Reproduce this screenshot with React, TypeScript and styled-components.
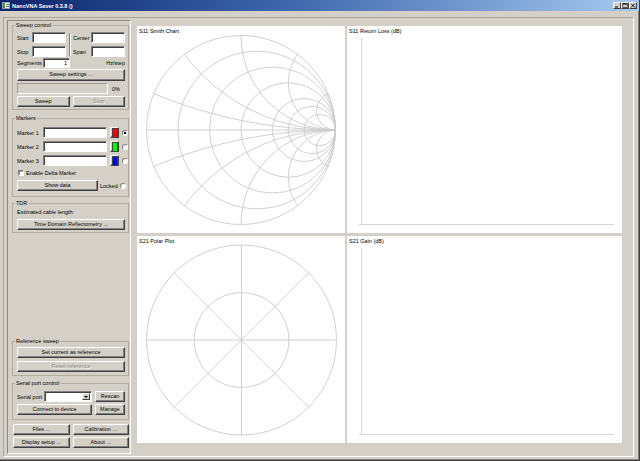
import React from "react";
import styled, { createGlobalStyle } from "styled-components";

const GlobalStyle = createGlobalStyle`
  html, body {
    margin: 0;
    padding: 0;
    background: #d4d0c8;
  }
  body {
    font-family: "Liberation Sans", Arial, sans-serif;
    font-size: 5.5px;
    color: #000;
  }
  * {
    box-sizing: border-box;
  }
`;

// ---- window chrome ----
const Window = styled.div`
  width: 640px;
  height: 461px;
  overflow: hidden;
  display: flex;
  flex-direction: column;
  background: #d4d0c8;
  border-right: 1px solid #404040;
  border-bottom: 1px solid #404040;
  box-shadow: inset -1px -1px 0 #808080;
`;

const TitleBar = styled.div`
  flex: none;
  height: 11px;
  display: flex;
  align-items: center;
  padding: 0 2px 0 2px;
  background: linear-gradient(to right, #0a246a 0%, #3e67ad 45%, #a6caf0 100%);
`;

const TitleText = styled.span`
  margin-left: 2px;
  color: #fff;
  font-weight: bold;
  font-size: 5.5px;
  white-space: nowrap;
`;

const CaptionButtons = styled.div`
  margin-left: auto;
  display: flex;
`;

const CaptionButton = styled.div`
  width: 8px;
  height: 7px;
  display: flex;
  align-items: center;
  justify-content: center;
  background: #d4d0c8;
  border: 1px solid;
  border-color: #fff #404040 #404040 #fff;
`;

const Client = styled.div`
  flex: 1;
  display: flex;
  padding: 6px 5px 3px 3px;
`;

const Central = styled.div`
  flex: 1;
  display: flex;
  align-items: flex-start;
  border: 1px solid;
  border-color: #aaa69e #fff #fff #aaa69e;
`;

// ---- left control pane ----
const ControlPane = styled.div`
  flex: none;
  width: 124px;
  height: 434px;
  margin: 2px 0 0 3px;
  display: flex;
  flex-direction: column;
  padding: 1px 1px 5px 4px;
  border: 1px solid;
  border-color: #8c8880 #fff #fff #8c8880;
`;

const Group = styled.fieldset<{ $mt?: number; $pt: number; $pb: number }>`
  margin: ${(p) => p.$mt ?? 0}px 0 0 0;
  padding: ${(p) => p.$pt}px 3px ${(p) => p.$pb}px 4px;
  min-width: 0;
  border: 1px solid #b0aca4;
  display: flex;
  flex-direction: column;
`;

const Legend = styled.legend`
  font-size: 5.5px;
  line-height: 7px;
  padding: 0 1px;
  margin-left: -2px;
`;

const Spacer = styled.div`
  flex: 1;
`;

const Row = styled.div<{ $h: number; $mt?: number; $cols: string; $gap?: number }>`
  flex: none;
  height: ${(p) => p.$h}px;
  margin-top: ${(p) => p.$mt ?? 0}px;
  display: grid;
  grid-template-columns: ${(p) => p.$cols};
  column-gap: ${(p) => p.$gap ?? 0}px;
  align-items: center;
`;

const FreqGrid = styled.div`
  flex: none;
  height: 25px;
  display: grid;
  grid-template-columns: 15px 34px 7px 18px 34px;
  grid-template-rows: 11px 11px;
  row-gap: 3px;
  align-items: center;
`;

const Separator = styled.div`
  grid-column: 3;
  grid-row: 1 / span 2;
  justify-self: center;
  width: 2px;
  height: 23px;
  border-left: 1px solid #808080;
  border-right: 1px solid #fff;
`;

const Label = styled.span<{ $align?: string }>`
  white-space: nowrap;
  text-align: ${(p) => p.$align ?? "left"};
`;

const TextLine = styled.div`
  flex: none;
  height: 7px;
  line-height: 7px;
  white-space: nowrap;
`;

const Field = styled.input<{ $align?: string }>`
  width: 100%;
  height: 11px;
  margin: 0;
  padding: 0 2px;
  font: inherit;
  font-size: 5.5px;
  text-align: ${(p) => p.$align ?? "left"};
  background: #fff;
  border: 1px solid;
  border-color: #808080 #fff #fff #808080;
  box-shadow: inset 1px 1px 0 #404040;
  outline: none;
`;

const Button = styled.button<{ $h?: number; $mt?: number; $off?: boolean }>`
  flex: none;
  width: 100%;
  height: ${(p) => p.$h ?? 11}px;
  margin: ${(p) => p.$mt ?? 0}px 0 0 0;
  padding: 0;
  font: inherit;
  font-size: 5.5px;
  line-height: 1;
  white-space: nowrap;
  color: ${(p) => (p.$off ? "#86827a" : "#000")};
  text-shadow: ${(p) => (p.$off ? "0.5px 0.5px 0 #fff" : "none")};
  background: #d4d0c8;
  border: 1px solid;
  border-color: #fff #404040 #404040 #fff;
  box-shadow: inset -1px -1px 0 #808080;
`;

const ColorButton = styled.div<{ $color: string }>`
  width: 9px;
  height: 11px;
  display: flex;
  align-items: center;
  justify-content: center;
  background: #d4d0c8;
  border: 1px solid;
  border-color: #fff #404040 #404040 #fff;
  box-shadow: inset -1px -1px 0 #808080;

  &::after {
    content: "";
    width: 4px;
    height: 8px;
    background: ${(p) => p.$color};
    border: 0.5px solid #404040;
  }
`;

const Radio = styled.span<{ $on?: boolean }>`
  width: 6px;
  height: 6px;
  border-radius: 50%;
  border: 1px solid;
  border-color: #808080 #fff #fff #808080;
  background: ${(p) =>
    p.$on ? "radial-gradient(circle, #000 0 1.1px, #fff 1.4px)" : "#fff"};
`;

const CheckRow = styled.div`
  flex: none;
  height: 8px;
  margin-top: 3px;
  display: flex;
  align-items: center;
  gap: 2px;
  padding-left: 1px;
`;

const CheckBox = styled.span`
  width: 6px;
  height: 6px;
  background: #fff;
  border: 1px solid;
  border-color: #808080 #fff #fff #808080;
  box-shadow: inset 0.5px 0.5px 0 #404040;
`;

const Progress = styled.div`
  height: 11px;
  background: #d4d0c8;
  border: 1px solid;
  border-color: #a09c94 #fff #fff #a09c94;
`;

const Combo = styled.div`
  height: 11px;
  display: flex;
  justify-content: flex-end;
  padding: 1px;
  background: #fff;
  border: 1px solid;
  border-color: #808080 #fff #fff #808080;
  box-shadow: inset 1px 1px 0 #404040;
`;

const ComboArrow = styled.div`
  width: 8px;
  height: 100%;
  display: flex;
  align-items: center;
  justify-content: center;
  background: #d4d0c8;
  border: 1px solid;
  border-color: #fff #404040 #404040 #fff;

  &::after {
    content: "";
    border-left: 2px solid transparent;
    border-right: 2px solid transparent;
    border-top: 2px solid #000;
  }
`;

const BottomButtons = styled.div<{ $mt: number }>`
  flex: none;
  margin-top: ${(p) => p.$mt}px;
  padding-left: 1px;
  display: grid;
  grid-template-columns: 1fr 1fr;
  column-gap: 3px;
`;

// ---- charts ----
const ChartGrid = styled.div`
  flex: none;
  margin: 8px 0 0 6px;
  display: grid;
  grid-template-columns: 208px 275px;
  grid-template-rows: 207px 207px;
  column-gap: 2px;
  row-gap: 3px;
`;

const ChartPanel = styled.div`
  display: grid;
  background: #fff;
  overflow: hidden;
`;

const ChartTitle = styled.div`
  grid-area: 1 / 1;
  align-self: start;
  padding: 2px 0 0 2px;
  line-height: 7px;
  white-space: nowrap;
`;

const ChartSvg = styled.svg`
  grid-area: 1 / 1;
  display: block;
`;

const GRID = "#cbcbcb";

const SmithChart = () => {
  const cx = 104;
  const cy = 104;
  const R = 94.5;
  const resistances = [0.2, 0.5, 1, 2, 3, 5];
  const reactances = [0.2, 0.5, 1, 2, 5];
  return (
    <ChartSvg width={208} height={207} viewBox="0 0 208 207">
      <defs>
        <clipPath id="smith-clip">
          <circle cx={cx} cy={cy} r={R} />
        </clipPath>
      </defs>
      <g fill="none" stroke={GRID} strokeWidth={0.9}>
        <circle cx={cx} cy={cy} r={R} />
        <line x1={cx - R} y1={cy} x2={cx + R} y2={cy} />
        {resistances.map((r) => (
          <circle key={r} cx={cx + (R * r) / (1 + r)} cy={cy} r={R / (1 + r)} />
        ))}
        <g clipPath="url(#smith-clip)">
          {reactances.map((x) =>
            [1, -1].map((s) => (
              <circle key={`${x}-${s}`} cx={cx + R} cy={cy - (s * R) / x} r={R / x} />
            ))
          )}
        </g>
      </g>
    </ChartSvg>
  );
};

const PolarChart = () => {
  const cx = 104.5;
  const cy = 104;
  const R = 95;
  const d = R / Math.SQRT2;
  return (
    <ChartSvg width={208} height={207} viewBox="0 0 208 207">
      <g fill="none" stroke={GRID} strokeWidth={0.9}>
        <circle cx={cx} cy={cy} r={R} />
        <circle cx={cx} cy={cy} r={R / 2} />
        <line x1={cx - R} y1={cy} x2={cx + R} y2={cy} />
        <line x1={cx} y1={cy - R} x2={cx} y2={cy + R} />
        <line x1={cx - d} y1={cy - d} x2={cx + d} y2={cy + d} />
        <line x1={cx - d} y1={cy + d} x2={cx + d} y2={cy - d} />
      </g>
    </ChartSvg>
  );
};

const LogMagChart = () => (
  <ChartSvg width={275} height={207} viewBox="0 0 275 207">
    <g stroke="#d6d6d6" strokeWidth={1}>
      <line x1={14.5} y1={12} x2={14.5} y2={198} />
      <line x1={12} y1={198.5} x2={267} y2={198.5} />
    </g>
  </ChartSvg>
);

const AppIcon = () => (
  <svg width={8} height={7} viewBox="0 0 8 7">
    <rect x={0.5} y={0.5} width={7} height={6} fill="#f2f2f2" stroke="#8a9aa8" strokeWidth={1} />
    <rect x={1} y={1} width={2} height={5} fill="#3c9a3c" />
    <line x1={4} y1={2.5} x2={7} y2={2.5} stroke="#40506a" strokeWidth={0.8} />
    <line x1={4} y1={4.5} x2={7} y2={4.5} stroke="#40506a" strokeWidth={0.8} />
  </svg>
);

const MarkerRow = ({ n, color, on, mt }: { n: number; color: string; on?: boolean; mt?: number }) => (
  <Row $h={11} $mt={mt} $cols="23px 64px 9px 6px" $gap={3}>
    <Label>Marker {n}</Label>
    <Field readOnly value="" />
    <ColorButton $color={color} />
    <Radio $on={on} />
  </Row>
);

export default function App() {
  return (
    <>
      <GlobalStyle />
      <Window>
        <TitleBar>
          <AppIcon />
          <TitleText>NanoVNA Saver 0.3.8 ()</TitleText>
          <CaptionButtons>
            <CaptionButton>
              <svg width={6} height={5} viewBox="0 0 6 5">
                <rect x={1} y={3.5} width={3} height={1} fill="#000" />
              </svg>
            </CaptionButton>
            <CaptionButton>
              <svg width={6} height={5} viewBox="0 0 6 5">
                <rect x={0.8} y={0.5} width={4.4} height={4} fill="none" stroke="#000" strokeWidth={0.6} />
                <rect x={0.8} y={0.5} width={4.4} height={1} fill="#000" />
              </svg>
            </CaptionButton>
            <CaptionButton>
              <svg width={6} height={5} viewBox="0 0 6 5">
                <path d="M1 0.5 L5 4.5 M5 0.5 L1 4.5" stroke="#000" strokeWidth={0.9} />
              </svg>
            </CaptionButton>
          </CaptionButtons>
        </TitleBar>

        <Client>
          <Central>
            <ControlPane>
              <Group $pt={3} $pb={2}>
                <Legend>Sweep control</Legend>
                <FreqGrid>
                  <Label>Start</Label>
                  <Field readOnly value="" />
                  <Separator />
                  <Label>Center</Label>
                  <Field readOnly value="" />
                  <Label>Stop</Label>
                  <Field readOnly value="" />
                  <Label>Span</Label>
                  <Field readOnly value="" />
                </FreqGrid>
                <Row $h={10} $mt={1} $cols="26px 27px 1fr">
                  <Label>Segments</Label>
                  <Field readOnly value="1" $align="right" style={{ height: 10 }} />
                  <Label $align="right">Hz/step</Label>
                </Row>
                <Button $h={12} $mt={1}>Sweep settings ...</Button>
                <Row $h={11} $mt={2} $cols="1fr 13px" $gap={4}>
                  <Progress />
                  <Label>0%</Label>
                </Row>
                <Row $h={11} $mt={2} $cols="1fr 1fr" $gap={3}>
                  <Button>Sweep</Button>
                  <Button $off>Stop</Button>
                </Row>
              </Group>

              <Group $mt={5} $pt={5} $pb={5}>
                <Legend>Markers</Legend>
                <MarkerRow n={1} color="#ff0000" on />
                <MarkerRow n={2} color="#00ff00" mt={3} />
                <MarkerRow n={3} color="#0000ff" mt={3} />
                <CheckRow>
                  <CheckBox />
                  <Label>Enable Delta Marker</Label>
                </CheckRow>
                <Row $h={11} $mt={3} $cols="81px 1fr 6px" $gap={2}>
                  <Button>Show data</Button>
                  <Label>Locked</Label>
                  <Radio />
                </Row>
              </Group>

              <Group $mt={3} $pt={2} $pb={2}>
                <Legend>TDR</Legend>
                <TextLine>Estimated cable length:</TextLine>
                <Button $mt={3}>Time Domain Reflectometry ...</Button>
              </Group>

              <Spacer />

              <Group $pt={2} $pb={3}>
                <Legend>Reference sweep</Legend>
                <Button>Set current as reference</Button>
                <Button $mt={3} $off>Reset reference</Button>
              </Group>

              <Group $mt={4} $pt={4} $pb={4}>
                <Legend>Serial port control</Legend>
                <Row $h={11} $cols="24px 48px 1fr" $gap={3}>
                  <Label>Serial port</Label>
                  <Combo>
                    <ComboArrow />
                  </Combo>
                  <Button>Rescan</Button>
                </Row>
                <Row $h={11} $mt={2} $cols="75px 1fr" $gap={3}>
                  <Button>Connect to device</Button>
                  <Button>Manage</Button>
                </Row>
              </Group>

              <BottomButtons $mt={4}>
                <Button>Files ...</Button>
                <Button>Calibration ...</Button>
              </BottomButtons>
              <BottomButtons $mt={2}>
                <Button>Display setup ...</Button>
                <Button>About ...</Button>
              </BottomButtons>
            </ControlPane>

            <ChartGrid>
              <ChartPanel>
                <SmithChart />
                <ChartTitle>S11 Smith Chart</ChartTitle>
              </ChartPanel>
              <ChartPanel>
                <LogMagChart />
                <ChartTitle>S11 Return Loss (dB)</ChartTitle>
              </ChartPanel>
              <ChartPanel>
                <PolarChart />
                <ChartTitle>S21 Polar Plot</ChartTitle>
              </ChartPanel>
              <ChartPanel>
                <LogMagChart />
                <ChartTitle>S21 Gain (dB)</ChartTitle>
              </ChartPanel>
            </ChartGrid>
          </Central>
        </Client>
      </Window>
    </>
  );
}
